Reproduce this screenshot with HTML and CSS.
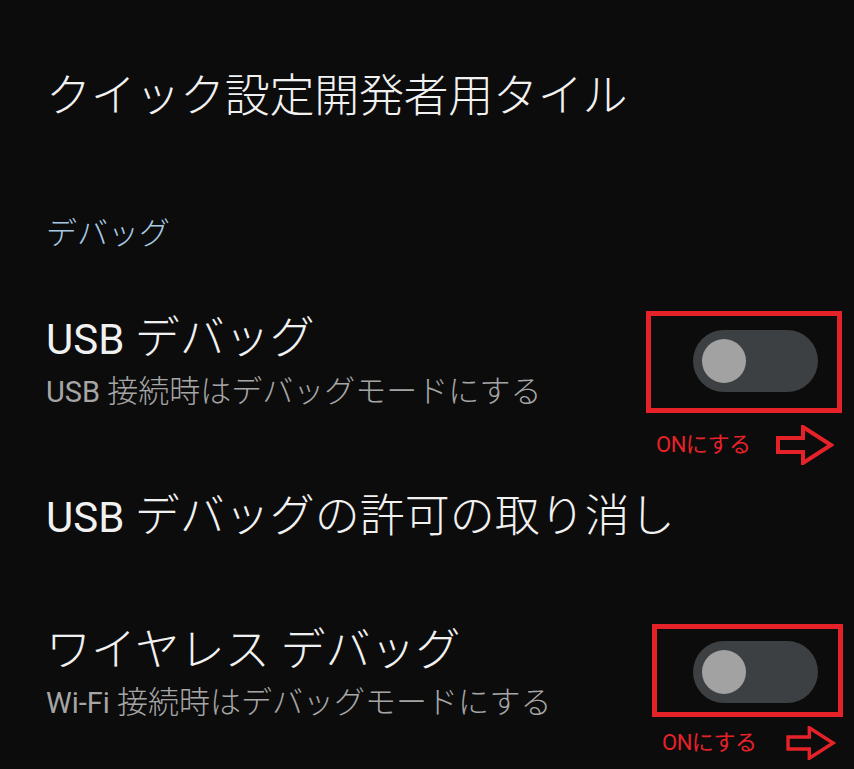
FILE: index.html
```html
<!DOCTYPE html>
<html lang="ja">
<head>
<meta charset="utf-8">
<link rel="stylesheet" href="styles.css">
</head>
<body>
<main class="screen">
  <h1 class="page-title">クイック設定開発者用タイル</h1>
  <div class="category">デバッグ</div>

  <div class="row row-first">
    <div class="texts">
      <div class="item-title"><span class="lat">USB </span>デバッグ</div>
      <div class="item-sub"><span class="lat">USB </span>接続時はデバッグモードにする</div>
    </div>
    <div class="mark mark-a">
      <div class="switch"><div class="thumb"></div></div>
    </div>
    <div class="note note-a">
      <span class="note-text">ONにする</span>
      <svg class="arrow" width="58" height="40" viewBox="0 0 58 40"><polygon points="2,13 27,13 27,2 55,20 27,38 27,27 2,27" fill="none" stroke="#e62229" stroke-width="4" stroke-linejoin="miter"/></svg>
    </div>
  </div>

  <div class="row row-plain">
    <div class="texts">
      <div class="item-title"><span class="lat">USB </span>デバッグの許可の取り消し</div>
    </div>
  </div>

  <div class="row row-last">
    <div class="texts">
      <div class="item-title">ワイヤレス デバッグ</div>
      <div class="item-sub"><span class="lat">Wi-Fi </span>接続時はデバッグモードにする</div>
    </div>
    <div class="mark mark-b">
      <div class="switch"><div class="thumb"></div></div>
    </div>
    <div class="note note-b">
      <span class="note-text">ONにする</span>
      <svg class="arrow arrow-b" width="56" height="34" viewBox="0 0 58 40"><polygon points="2,13 27,13 27,2 55,20 27,38 27,27 2,27" fill="none" stroke="#e62229" stroke-width="4" stroke-linejoin="miter"/></svg>
    </div>
  </div>
</main>
</body>
</html>
```

FILE: styles.css
```css
html, body {
  margin: 0;
  padding: 0;
  background: #0c0c0c;
}
body {
  width: 854px;
  height: 769px;
  overflow: hidden;
  font-family: Roboto, "Noto Sans CJK JP", sans-serif;
}
.screen {
  padding: 67px 0 0 46px;
  display: flex;
  flex-direction: column;
}
.page-title {
  margin: 0;
  font-size: 45px;
  font-weight: 300;
  line-height: 60px;
  color: #f1f1f1;
  letter-spacing: -0.3px;
}
.category {
  margin-top: 87px;
  font-size: 31px;
  font-weight: 300;
  line-height: 40px;
  color: #a8c9e2;
}
.row {
  position: relative;
  display: flex;
  align-items: center;
  justify-content: space-between;
}
.row-first {
  margin-top: 57px;
}
.row-plain {
  margin-top: 77px;
}
.row-last {
  margin-top: 79px;
  align-items: flex-start;
}
.texts {
  display: flex;
  flex-direction: column;
  gap: 5px;
}
.item-title {
  font-size: 45px;
  font-weight: 300;
  line-height: 54px;
  color: #f1f1f1;
}
.item-title .lat {
  font-size: 42px;
  font-weight: 400;
}
.item-sub {
  font-size: 31px;
  font-weight: 300;
  line-height: 40px;
  color: #a6a6a6;
}
.item-sub .lat {
  font-size: 29px;
  font-weight: 400;
}
.mark {
  border: 5px solid #e62229;
  box-sizing: border-box;
  display: flex;
  align-items: center;
}
.mark-a {
  width: 196px;
  height: 102px;
  margin-right: 12px;
  padding-left: 42px;
  padding-bottom: 2px;
}
.mark-b {
  width: 191px;
  height: 93px;
  margin-right: 11px;
  padding-left: 36px;
  padding-top: 3px;
}
.switch {
  width: 125px;
  height: 62px;
  border-radius: 31px;
  background: #3d4042;
  display: flex;
  align-items: center;
  padding-left: 9px;
  box-sizing: border-box;
}
.thumb {
  width: 44px;
  height: 44px;
  border-radius: 50%;
  background: #a2a2a2;
}
.note {
  position: absolute;
  display: flex;
  align-items: center;
}
.note-a {
  left: 610px;
  top: 114px;
  gap: 25px;
}
.note-b {
  left: 616px;
  top: 102px;
  gap: 26px;
}
.note-text {
  font-size: 22px;
  line-height: 30px;
  color: #e62229;
  letter-spacing: -0.5px;
}
.arrow {
  display: block;
}
```
